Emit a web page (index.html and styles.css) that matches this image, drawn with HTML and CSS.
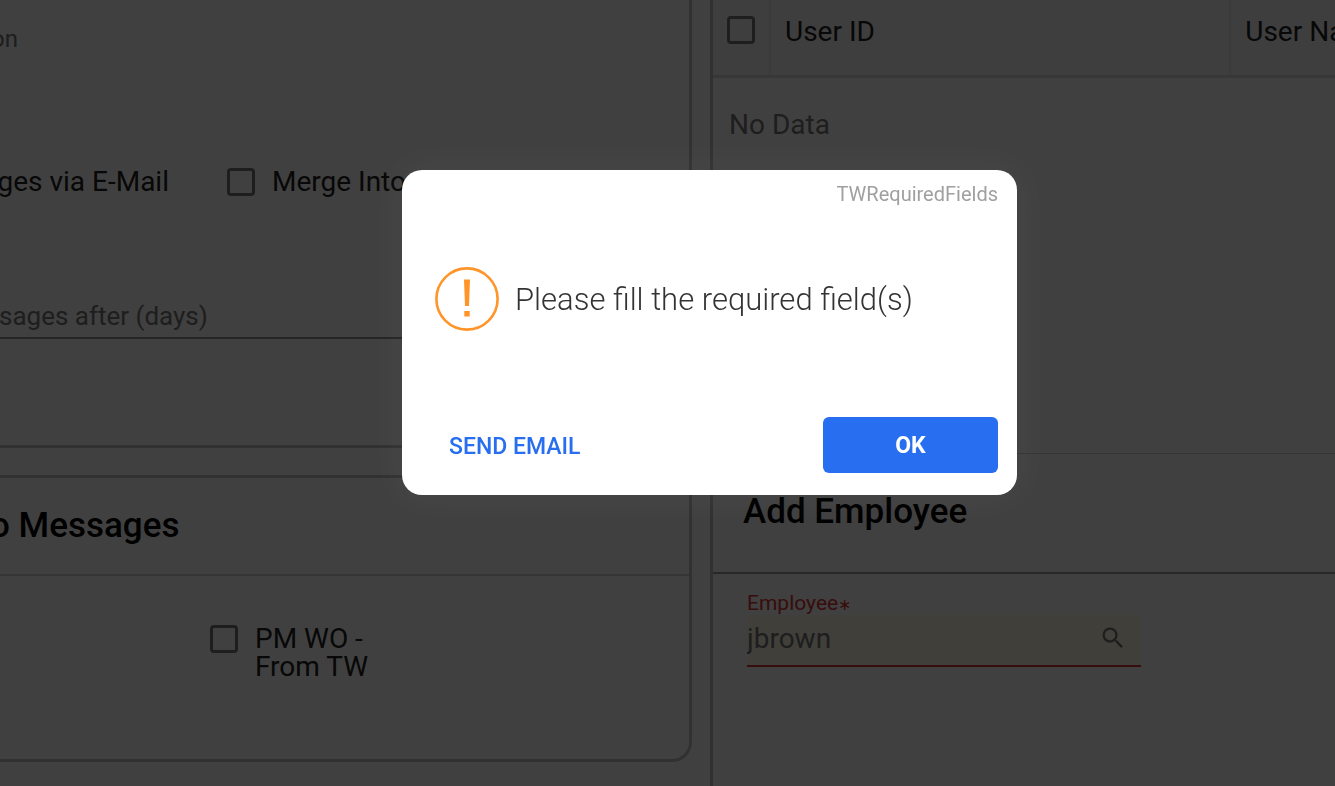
FILE: index.html
```html
<!DOCTYPE html>
<html lang="en">
<head>
<meta charset="utf-8">
<title>Required fields</title>
<link rel="stylesheet" href="styles.css">
</head>
<body>
<div class="page">
  <div class="column">
    <section class="card card-options">
      <p class="caption">on</p>
      <div class="options">
        <span class="option-name">ges via E-Mail</span>
        <label class="check"><input class="box" type="checkbox"><span>Merge Into</span></label>
      </div>
      <input class="days" type="text" aria-label="Messages after (days)" placeholder="sages after (days)">
    </section>
    <section class="card card-messages">
      <h2 class="title title-messages">o Messages</h2>
      <div class="message-list">
        <label class="check"><input class="box" type="checkbox"><span>PM WO -<br>From TW</span></label>
      </div>
    </section>
  </div>
  <div class="column panel">
    <div class="users">
      <table class="table">
        <thead>
          <tr>
            <th class="cell-check"><input class="box" type="checkbox" aria-label="Select all users"></th>
            <th class="cell-id">User ID</th>
            <th class="cell-name">User Name</th>
          </tr>
        </thead>
        <tbody>
          <tr><td class="empty" colspan="3">No Data</td></tr>
        </tbody>
      </table>
    </div>
    <h2 class="title title-employee">Add Employee</h2>
    <div class="form">
      <label class="field-label" for="employee">Employee<span class="star">∗</span></label>
      <div class="field">
        <input class="field-input" id="employee" type="text" value="jbrown">
        <button class="search" type="button" aria-label="Search">
          <svg class="search-icon" viewBox="0 0 24 24"><path d="M15.500 14h-.79l-.28-.27A6.471 6.471 0 0 0 16 9.500 6.500 6.500 0 1 0 9.500 16c1.610 0 3.090-.59 4.230-1.570l.27.28v.79l5 4.990L20.490 19l-4.990-5zm-6 0C7.010 14 5 11.990 5 9.500S7.010 5 9.500 5 14 7.010 14 9.500 11.990 14 9.500 14z"/></svg>
        </button>
      </div>
    </div>
  </div>
</div>
<div class="overlay">
  <div class="dialog" role="alertdialog" aria-labelledby="message">
    <div class="dialog-name">TWRequiredFields</div>
    <div class="dialog-body">
      <svg class="alert-icon" viewBox="0 0 64 64"><circle cx="32" cy="32" r="30.600"/><path d="M29 12.500h6l-1 26.500h-4zM29.300 44h5.400v5.500h-5.400z"/></svg>
      <p class="message" id="message">Please fill the required field(s)</p>
    </div>
    <div class="actions">
      <button class="send" type="button">SEND EMAIL</button>
      <button class="ok" type="button">OK</button>
    </div>
  </div>
</div>
</body>
</html>
```
FILE: styles.css
```css
* {
  box-sizing: border-box;
}

body {
  margin: 0;
  overflow: hidden;
  background: #fff;
  color: #202020;
  font: 400 28px/28px Roboto, sans-serif;
}

button,
input {
  font: inherit;
}

.page {
  display: grid;
  grid-template-columns: minmax(0, 716fr) minmax(0, 625fr);
  gap: 18px;
  min-height: 100vh;
  margin-left: -24px;
}

.card {
  border: 3px solid #c4c4c4;
}

.card-options {
  padding: 25px 0 106px;
  border-top: 0;
  border-radius: 0 0 20px 20px;
}

.caption {
  width: 39px;
  margin: 0 0 115px;
  color: #777;
  font-size: 24px;
  text-align: right;
}

.options {
  display: flex;
  gap: 58px;
}

.option-name {
  width: 190px;
  text-align: right;
}

.check {
  display: flex;
  gap: 17px;
}

.box {
  appearance: none;
  flex: none;
  width: 28px;
  height: 28px;
  margin: 0;
  border: 3px solid #777;
  border-radius: 4px;
}

.days {
  display: block;
  width: 100%;
  height: 37px;
  margin-top: 106px;
  padding: 0 0 8px 20px;
  border: 0;
  border-bottom: 2px solid #949494;
  background: transparent;
  font-size: 26px;
}

.days::placeholder {
  color: #777;
  opacity: 1;
}

.card-messages {
  margin-top: 27px;
  border-radius: 20px;
}

.title {
  margin: 0;
  color: #000;
  font-size: 35px;
  font-weight: 500;
  line-height: 40px;
}

.title-messages {
  padding: 28px 0 28px 11px;
  border-bottom: 2px solid #d4d4d4;
}

.message-list {
  padding: 49px 0 78px 231px;
}

.panel {
  border-left: 3px solid #c4c4c4;
}

.users {
  height: 454px;
  border-bottom: 1px solid #d4d4d4;
}

.table {
  width: 100%;
  border-collapse: collapse;
  table-layout: fixed;
}

.table th {
  height: 76px;
  padding: 0 0 10px 14px;
  border-right: 2px solid #ebebeb;
  border-bottom: 3px solid #dcdcdc;
  background: #f8f8f8;
  font-weight: 400;
  text-align: left;
  white-space: nowrap;
}

.table .cell-check {
  width: 57px;
  padding-bottom: 14px;
}

.table .cell-id {
  width: 74%;
}

.table .cell-check .box {
  display: block;
}

.table .cell-name {
  border-right: 0;
}

.empty {
  padding: 33px 16px;
  color: #777;
}

.title-employee {
  padding: 38px 0 40px 30px;
  border-bottom: 2px solid #a0a0a0;
}

.form {
  width: 428px;
  padding: 17px 0 0 34px;
}

.field-label {
  display: block;
  height: 24px;
  color: #d93636;
  font-size: 21px;
  line-height: 24px;
}

.star {
  font-size: 16px;
}

.field {
  display: flex;
  align-items: flex-start;
  height: 52px;
  border-bottom: 2px solid #d93030;
  background: #fffae8;
}

.field-input {
  flex: 1;
  min-width: 0;
  height: 46px;
  padding: 0;
  border: 0;
  background: transparent;
  color: #777;
}

.search {
  width: 56px;
  height: 46px;
  padding: 0;
  border: 0;
  background: transparent;
}

.search-icon {
  display: block;
  width: 28px;
  margin: 0 auto;
  fill: #777;
}

.overlay {
  position: fixed;
  inset: 0;
  display: flex;
  align-items: flex-start;
  justify-content: center;
  padding: 170px 0 0 84px;
  background: rgba(0, 0, 0, .75);
}

.dialog {
  width: 615px;
  padding: 12px 19px 22px;
  border-radius: 20px;
  background: #fff;
  box-shadow: 0 0 36px rgba(255, 255, 255, .04);
}

.dialog-name {
  color: #a0a0a0;
  font-size: 20px;
  line-height: 24px;
  text-align: right;
}

.dialog-body {
  display: flex;
  align-items: center;
  gap: 16px;
  padding: 61px 14px 86px;
}

.alert-icon {
  flex: none;
  width: 64px;
  fill: #ff9429;
}

.alert-icon circle {
  fill: none;
  stroke: #ff9429;
  stroke-width: 2.6;
}

.message {
  margin: 0;
  padding-top: 2px;
  color: #333;
  font-size: 31px;
  font-weight: 300;
  line-height: 40px;
}

.actions {
  display: flex;
  align-items: center;
  justify-content: space-between;
}

.send,
.ok {
  height: 56px;
  border: 0;
  font-size: 23px;
  font-weight: 500;
}

.send {
  padding: 4px 28px 0;
  background: transparent;
  color: #286ef0;
}

.ok {
  width: 175px;
  padding: 2px 0 0;
  border-radius: 6px;
  background: #286ef0;
  color: #fff;
  font-weight: 700;
}
```
